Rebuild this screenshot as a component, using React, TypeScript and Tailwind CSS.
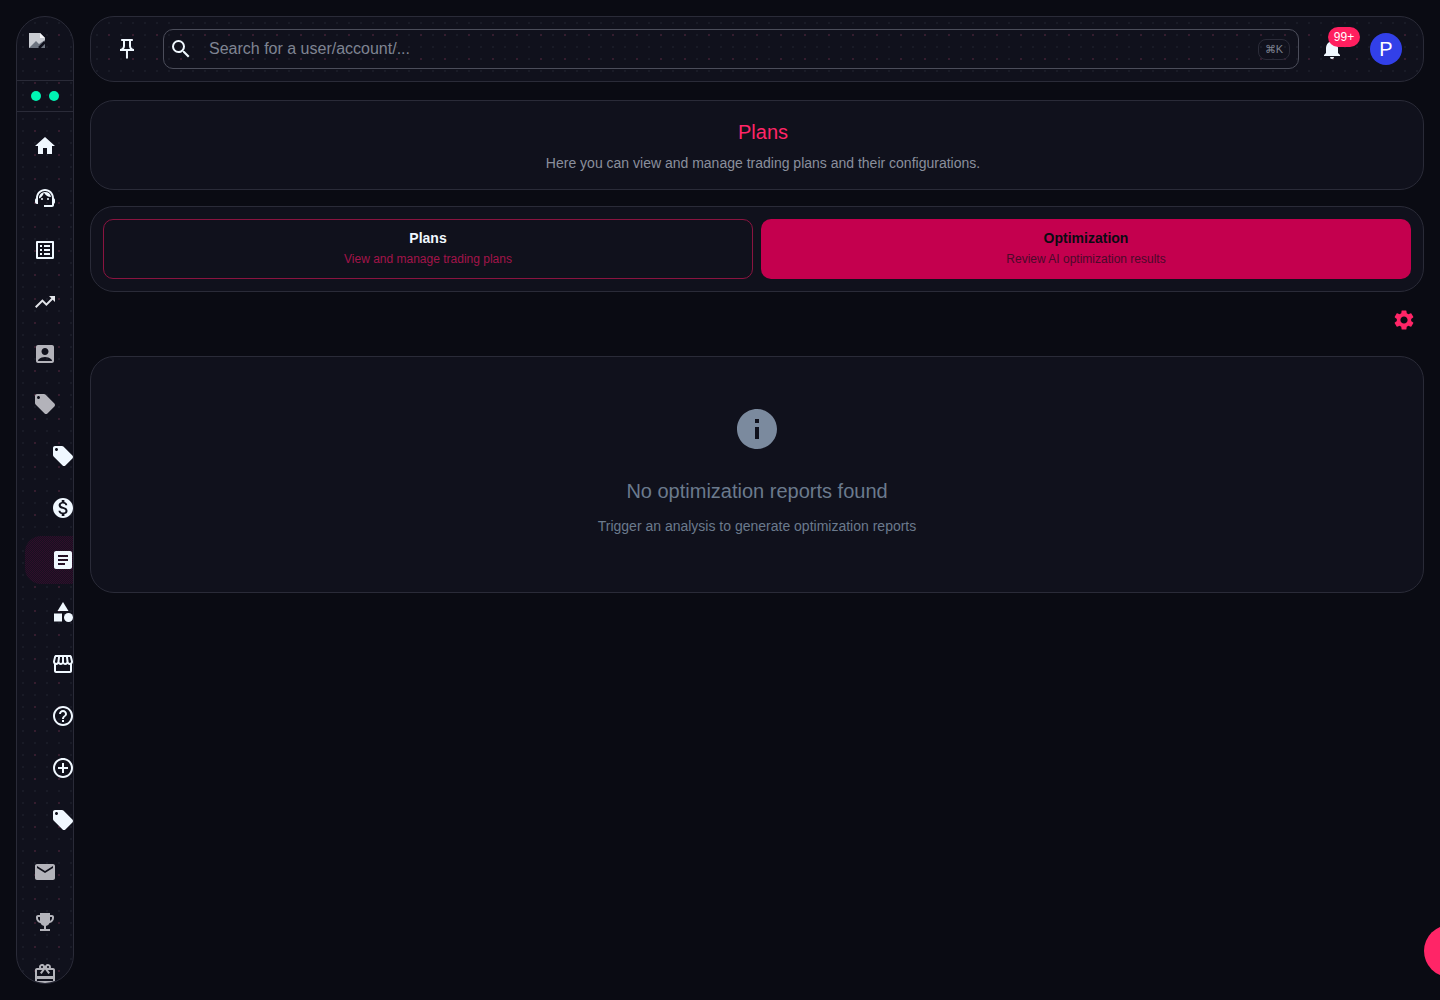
import type { ReactNode } from "react";
import {
  MdAccountBox,
  MdAddCircleOutline,
  MdArticle,
  MdCategory,
  MdEmail,
  MdEmojiEvents,
  MdHelpOutline,
  MdHome,
  MdInfo,
  MdListAlt,
  MdLocalOffer,
  MdMonetizationOn,
  MdNotifications,
  MdOutlinePushPin,
  MdOutlineStorefront,
  MdRedeem,
  MdSearch,
  MdSettings,
  MdSupportAgent,
  MdTrendingUp,
} from "react-icons/md";

const dots =
  "bg-[#10111c] bg-[radial-gradient(rgba(148,163,184,0.07)_0.7px,transparent_0.9px),radial-gradient(rgba(255,32,96,0.13)_0.7px,transparent_0.9px)] bg-[length:12px_12px,24px_24px] bg-[position:0_0,6px_6px]";

function NavItem({
  children,
  nested,
  dim,
  active,
  soft,
}: {
  children: ReactNode;
  nested?: boolean;
  dim?: boolean;
  active?: boolean;
  soft?: boolean;
}) {
  let color = "text-[#f0f8ff]";
  if (dim) color = "text-[#b3b3ba]";
  if (soft) color = "text-[#e2e4e9]";
  let spacing = nested ? "pl-[34px]" : "pl-[16px]";
  if (active) {
    spacing =
      "ml-2 pl-[26px] rounded-l-2xl bg-[repeating-conic-gradient(#300e29_0_25%,#171021_0_50%)] bg-[length:2px_2px]";
  }
  return (
    <div className={`flex h-12 shrink-0 items-center overflow-hidden [&>svg]:shrink-0 ${spacing} ${color}`}>
      {children}
    </div>
  );
}

function Sidebar() {
  return (
    <aside
      className={`flex h-[968px] w-[58px] shrink-0 flex-col overflow-hidden rounded-[29px] border border-[#2a2b38] ${dots}`}
    >
      <div className="h-[63px] shrink-0 pl-3 pt-4">
        <svg width="17" height="16" viewBox="0 0 17 16">
          <path d="M0 0h11l5 5v10H0z" fill="#c9ccd2" />
          <path d="M11 0l5 5h-5z" fill="#f4f5f7" />
          <path d="M0 15l7-7 3 3 6-4v8H0z" fill="#6d7480" />
          <path d="M10 15l6-6" stroke="#10111c" strokeWidth="2.5" />
        </svg>
      </div>
      <div className="flex h-[32px] shrink-0 items-center gap-[8px] border-y border-[#2a2b38] pl-[14px]">
        <span className="h-[10px] w-[10px] rounded-full bg-[#00f5b4]" />
        <span className="h-[10px] w-[10px] rounded-full bg-[#00f5b4]" />
      </div>
      <div className="flex flex-col gap-[4px] pt-[10px]">
        <NavItem><MdHome size={24} /></NavItem>
        <NavItem><MdSupportAgent size={24} /></NavItem>
        <NavItem><MdListAlt size={24} /></NavItem>
        <NavItem soft><MdTrendingUp size={24} /></NavItem>
        <NavItem dim><MdAccountBox size={24} /></NavItem>
        <div className="-mt-[2px]">
          <NavItem dim><MdLocalOffer size={24} /></NavItem>
        </div>
        <NavItem nested><MdLocalOffer size={24} /></NavItem>
        <NavItem nested><MdMonetizationOn size={24} /></NavItem>
        <NavItem nested active><MdArticle size={24} /></NavItem>
        <NavItem nested><MdCategory size={24} /></NavItem>
        <NavItem nested><MdOutlineStorefront size={24} /></NavItem>
        <NavItem nested><MdHelpOutline size={24} /></NavItem>
        <NavItem nested><MdAddCircleOutline size={24} /></NavItem>
        <NavItem nested><MdLocalOffer size={24} /></NavItem>
        <NavItem dim><MdEmail size={24} /></NavItem>
        <div className="-mt-[2px]">
          <NavItem dim><MdEmojiEvents size={24} /></NavItem>
        </div>
        <NavItem dim><MdRedeem size={24} /></NavItem>
      </div>
    </aside>
  );
}

function Header() {
  return (
    <header
      className={`flex h-[66px] items-center rounded-[24px] border border-[#2a2b38] pl-6 pr-[21px] ${dots}`}
    >
      <MdOutlinePushPin size={24} className="shrink-0 text-[#f0f8ff]" />
      <div className="ml-6 flex h-10 flex-1 items-center rounded-[10px] border border-[#4b4d5a] pl-[5px] pr-2">
        <MdSearch size={24} className="shrink-0 text-[#f0f8ff]" />
        <span className="ml-4 flex-1 text-base text-[#7f8492]">Search for a user/account/...</span>
        <span className="flex h-[21px] items-center rounded-lg border border-[#2a2b38] px-[6px] text-[11px] text-[#7d8290]">
          ⌘K
        </span>
      </div>
      <div className="relative ml-[21px] flex h-6 w-6 items-center justify-center text-[#f0f8ff]">
        <MdNotifications size={24} />
        <span className="absolute -right-[16px] -top-[10px] flex h-5 w-8 items-center justify-center rounded-full bg-[#ff1f5f] text-xs text-white">
          99+
        </span>
      </div>
      <div className="ml-[26px] flex h-8 w-8 items-center justify-center rounded-full bg-[#3240e8] text-xl text-white">
        P
      </div>
    </header>
  );
}

function Tabs() {
  return (
    <div className="mt-4 grid h-[86px] grid-cols-2 gap-2 rounded-[24px] border border-[#2a2b38] bg-[#10111c] p-3">
      <div className="flex flex-col items-center justify-center rounded-[10px] border border-[#8a1440] pb-[3px]">
        <div className="text-sm font-semibold leading-5 text-[#f0f8ff]">Plans</div>
        <div className="mt-[3px] text-xs leading-4 text-[#a3144a]">View and manage trading plans</div>
      </div>
      <div className="flex flex-col items-center justify-center rounded-[10px] bg-[#c4004e] pb-[3px]">
        <div className="text-sm font-semibold leading-5 text-[#0a0b12]">Optimization</div>
        <div className="mt-[3px] text-xs leading-4 text-[#4a0a2a]">Review AI optimization results</div>
      </div>
    </div>
  );
}

export default function App() {
  return (
    <div className="relative flex h-[1000px] gap-4 overflow-hidden bg-[#0a0b13] p-4 font-['Liberation_Sans',Arial,sans-serif]">
      <Sidebar />
      <main className="flex min-w-0 flex-1 flex-col">
        <Header />
        <section className="mt-[18px] flex h-[90px] flex-col items-center justify-center rounded-[24px] border border-[#2a2b38] bg-[#10111c] pl-3">
          <h1 className="text-xl leading-7 text-[#ff2567]">Plans</h1>
          <p className="mt-[7px] text-sm leading-5 text-[#8a8f9c]">
            Here you can view and manage trading plans and their configurations.
          </p>
        </section>
        <Tabs />
        <div className="flex h-[64px] items-center justify-end pb-2 pr-2">
          <MdSettings size={24} className="text-[#ff2567]" />
        </div>
        <section className="flex h-[237px] flex-col items-center rounded-[24px] border border-[#2a2b38] bg-[#10111c] pt-[48px]">
          <MdInfo size={48} className="text-[#7b8a9e]" />
          <h2 className="mt-6 text-xl leading-7 text-[#6b7a8d]">No optimization reports found</h2>
          <p className="mt-[11px] text-sm leading-5 text-[#6b7a8d]">
            Trigger an analysis to generate optimization reports
          </p>
        </section>
      </main>
      <div className="absolute -right-[36px] top-[925px] h-[52px] w-[52px] rounded-full bg-[#ff2567]" />
    </div>
  );
}
